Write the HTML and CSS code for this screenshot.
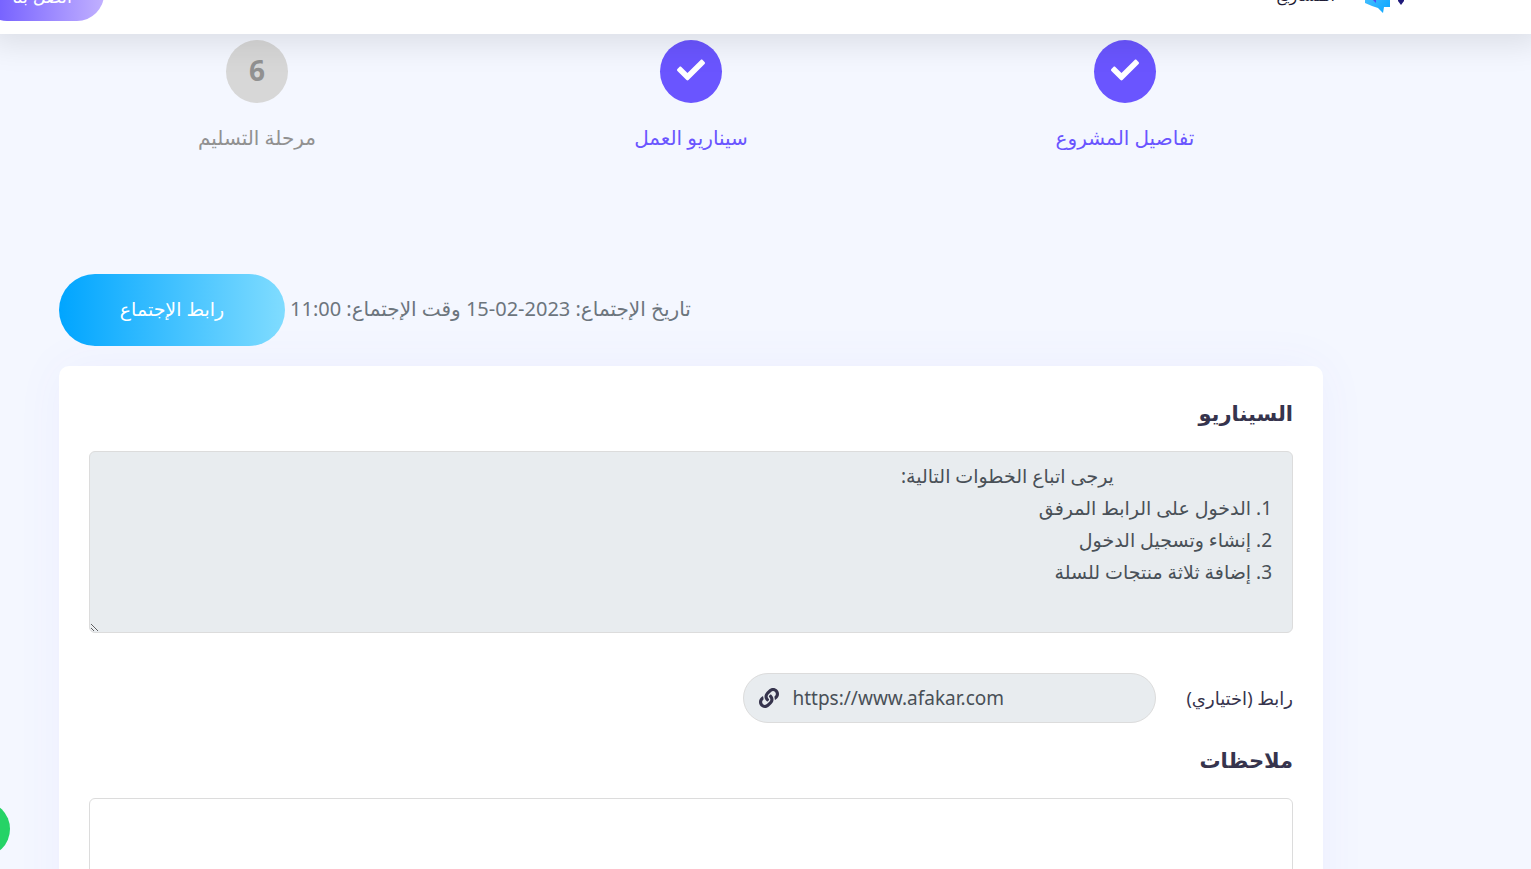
FILE: index.html
```html
<!DOCTYPE html>
<html lang="ar" dir="rtl">
<head>
    <meta charset="UTF-8">
    <meta name="viewport" content="width=device-width, initial-scale=1.0">
    <title>سيناريو العمل</title>
    <link rel="stylesheet" href="styles.css">
</head>
<body>
    <header class="header">
        <a href="#" class="logo" aria-label="afakar">
            <svg width="44" height="40" viewBox="0 0 44 40">
                <defs>
                    <linearGradient id="bubble" x1="0" y1="0" x2="1" y2="1">
                        <stop offset="0" stop-color="#5cc8ff"/>
                        <stop offset="1" stop-color="#0aa5ff"/>
                    </linearGradient>
                </defs>
                <path d="M2 4h25v29h-6l-1 6-5-5-6-2-7-3z" fill="url(#bubble)"/>
                <path d="M9 6h4v23l-3-3z" fill="#4a4df0"/>
                <path d="M36 14l5 9v4l-3 4-3-4z" fill="#1f1a7a"/>
            </svg>
        </a>
        <nav class="nav">
            <a href="#">المشاريع</a>
        </nav>
        <a href="#" class="btn btn-contact">اتصل بنا</a>
    </header>

    <main class="container">
        <ol class="steps">
            <li class="step done">
                <span class="step-circle">
                    <svg width="28" height="32" viewBox="0 0 512 512"><path fill="currentColor" d="M173.9 439.4l-166.4-166.4c-10-10-10-26.200 0-36.200l36.200-36.200c10-10 26.200-10 36.200 0L192 312.700 432.100 72.600c10-10 26.200-10 36.200 0l36.200 36.200c10 10 10 26.200 0 36.200l-294.400 294.400c-10 10-26.200 10-36.200 0z"/></svg>
                </span>
                <span class="step-label">تفاصيل المشروع</span>
            </li>
            <li class="step done">
                <span class="step-circle">
                    <svg width="28" height="32" viewBox="0 0 512 512"><path fill="currentColor" d="M173.9 439.4l-166.4-166.4c-10-10-10-26.200 0-36.200l36.200-36.200c10-10 26.200-10 36.200 0L192 312.700 432.100 72.600c10-10 26.200-10 36.200 0l36.200 36.200c10 10 10 26.200 0 36.200l-294.400 294.400c-10 10-26.200 10-36.200 0z"/></svg>
                </span>
                <span class="step-label">سيناريو العمل</span>
            </li>
            <li class="step">
                <span class="step-circle">6</span>
                <span class="step-label">مرحلة التسليم</span>
            </li>
        </ol>

        <div class="meeting">
            <span class="meeting-info">تاريخ الإجتماع: <bdi>15-02-2023</bdi> وقت الإجتماع: <bdi>11:00</bdi></span>
            <a href="#" class="btn btn-meeting">رابط الإجتماع</a>
        </div>

        <form class="card">
            <label class="title" for="scenario">السيناريو</label>
            <textarea class="field" id="scenario" readonly>                                يرجى اتباع الخطوات التالية:
1. الدخول على الرابط المرفق
2. إنشاء وتسجيل الدخول
3. إضافة ثلاثة منتجات للسلة</textarea>

            <div class="link-row">
                <label for="link">رابط (اختياري)</label>
                <div class="link-box">
                    <input type="url" id="link" value="https://www.afakar.com" readonly>
                    <svg width="20" height="20" viewBox="0 0 512 512"><path fill="currentColor" d="M326.612 185.391c59.747 59.809 58.927 155.698.36 214.590-.11.120-.240.250-.36.370l-67.200 67.200c-59.270 59.270-155.699 59.262-214.960 0-59.270-59.260-59.270-155.700 0-214.960l37.106-37.106c9.840-9.840 26.786-3.300 27.294 10.606.648 17.722 3.826 35.527 9.690 52.721 1.986 5.822.567 12.262-3.783 16.612l-13.087 13.087c-28.026 28.026-28.905 73.660-1.155 101.960 28.024 28.579 74.086 28.749 102.325.510l67.200-67.190c28.191-28.191 28.073-73.757 0-101.830-3.701-3.694-7.429-6.564-10.341-8.569a16.037 16.037 0 0 1-6.947-12.606c-.396-10.567 3.348-21.456 11.698-29.806l21.054-21.055c5.521-5.521 14.182-6.199 20.584-1.731a152.482 152.482 0 0 1 20.522 17.197zM467.547 44.449c-59.261-59.262-155.690-59.270-214.960 0l-67.200 67.200c-.12.120-.25.250-.36.370-58.566 58.892-59.387 154.781.36 214.590a152.454 152.454 0 0 0 20.521 17.196c6.402 4.468 15.064 3.789 20.584-1.731l21.054-21.055c8.350-8.350 12.094-19.239 11.698-29.806a16.037 16.037 0 0 0-6.947-12.606c-2.912-2.005-6.640-4.875-10.341-8.569-28.073-28.073-28.191-73.639 0-101.830l67.200-67.190c28.239-28.239 74.300-28.069 102.325.510 27.750 28.300 26.872 73.934-1.155 101.960l-13.087 13.087c-4.350 4.350-5.769 10.790-3.783 16.612 5.864 17.194 9.042 34.999 9.690 52.721.509 13.906 17.454 20.446 27.294 10.606l37.106-37.106c59.271-59.259 59.271-155.699.001-214.959z"/></svg>
                </div>
            </div>

            <label class="title" for="notes">ملاحظات</label>
            <textarea class="field" id="notes"></textarea>
        </form>
    </main>

    <a href="#" class="whatsapp" aria-label="WhatsApp"></a>
</body>
</html>
```
FILE: styles.css
```css
* {
    box-sizing: border-box;
}
body {
    margin: 0;
    height: 100vh;
    overflow: hidden;
    background-color: #f4f7ff;
    color: #36344d;
    font-family: "Noto Sans", "DejaVu Sans", sans-serif;
    font-size: 18px;
}
a {
    text-decoration: none;
}
/* header is partly scrolled off the top */
.header {
    position: relative;
    z-index: 2;
    display: flex;
    align-items: center;
    height: 80px;
    margin-top: -46px;
    padding-right: 124px;
    background-color: #fff;
    box-shadow: 0 0 30px 10px rgba(0, 0, 0, 0.1);
}
.logo svg {
    display: block;
}
.nav {
    flex: 1;
    margin-right: 28px;
}
.nav a {
    color: #1d1b33;
    font-size: 16px;
}
.btn {
    display: inline-block;
    border-radius: 36px;
    color: #fff;
    text-align: center;
}
.btn-contact {
    margin-left: -20px;
    padding: 4px 30px 0;
    min-width: 124px;
    line-height: 50px;
    background: linear-gradient(to right, #6a55ff, #c1b0ff);
}
.container {
    margin-right: 208px;
    margin-left: 59px;
}
.steps {
    display: flex;
    list-style: none;
    margin: 0 -19px;
    padding: 6px 0 0;
    height: 240px;
}
.step {
    flex: 1;
    display: flex;
    flex-direction: column;
    align-items: center;
    color: #919191;
}
.step-circle {
    display: flex;
    align-items: center;
    justify-content: center;
    width: 62px;
    height: 63px;
    padding-bottom: 3px;
    border-radius: 50%;
    background-color: #d7d7d7;
    font-size: 28px;
    font-weight: bold;
}
.step-label {
    margin-top: 19px;
    font-size: 20px;
    line-height: 32px;
}
.done {
    color: #6a55ff;
}
.done .step-circle {
    background-color: #6a55ff;
    color: #fff;
}
.meeting {
    display: flex;
    align-items: center;
    justify-content: flex-end;
    gap: 5px;
    margin-bottom: 20px;
    color: #6c757d;
}
.meeting-info {
    padding-bottom: 3px;
    font-size: 20px;
}
.btn-meeting {
    width: 226px;
    padding-bottom: 2px;
    line-height: 70px;
    background: linear-gradient(to right, #00a5ff, #80dcff);
    font-size: 19px;
}
.card {
    padding: 30px;
    border-radius: 10px;
    background-color: #fff;
    box-shadow: 0 0 50px rgba(106, 85, 255, 0.05);
}
.title {
    display: block;
    margin-bottom: 20px;
    font-size: 21px;
    font-weight: bold;
    line-height: 35px;
}
.field {
    display: block;
    width: 100%;
    height: 182px;
    padding: 8px 20px;
    border: 1px solid #dcdcdc;
    border-radius: 6px;
    background-color: #fff;
    color: #495057;
    font: inherit;
    font-size: 19px;
    line-height: 32px;
}
.field:read-only {
    background-color: #e8ecef;
}
.link-row {
    display: flex;
    align-items: center;
    gap: 30px;
    margin: 40px 0 20px;
}
.link-box {
    display: flex;
    align-items: center;
    width: 413px;
    height: 50px;
    padding: 0 15px;
    border: 1px solid #dcdcdc;
    border-radius: 25px;
    background-color: #e8ecef;
}
.link-box input {
    flex: 1;
    min-width: 0;
    margin-left: 13px;
    padding: 0;
    border: none;
    outline: none;
    background: transparent;
    color: #495057;
    direction: ltr;
    font: inherit;
    font-size: 19px;
}
.whatsapp {
    position: fixed;
    bottom: 12px;
    left: -46px;
    width: 56px;
    height: 56px;
    border-radius: 50%;
    background-color: #25d366;
}
```
